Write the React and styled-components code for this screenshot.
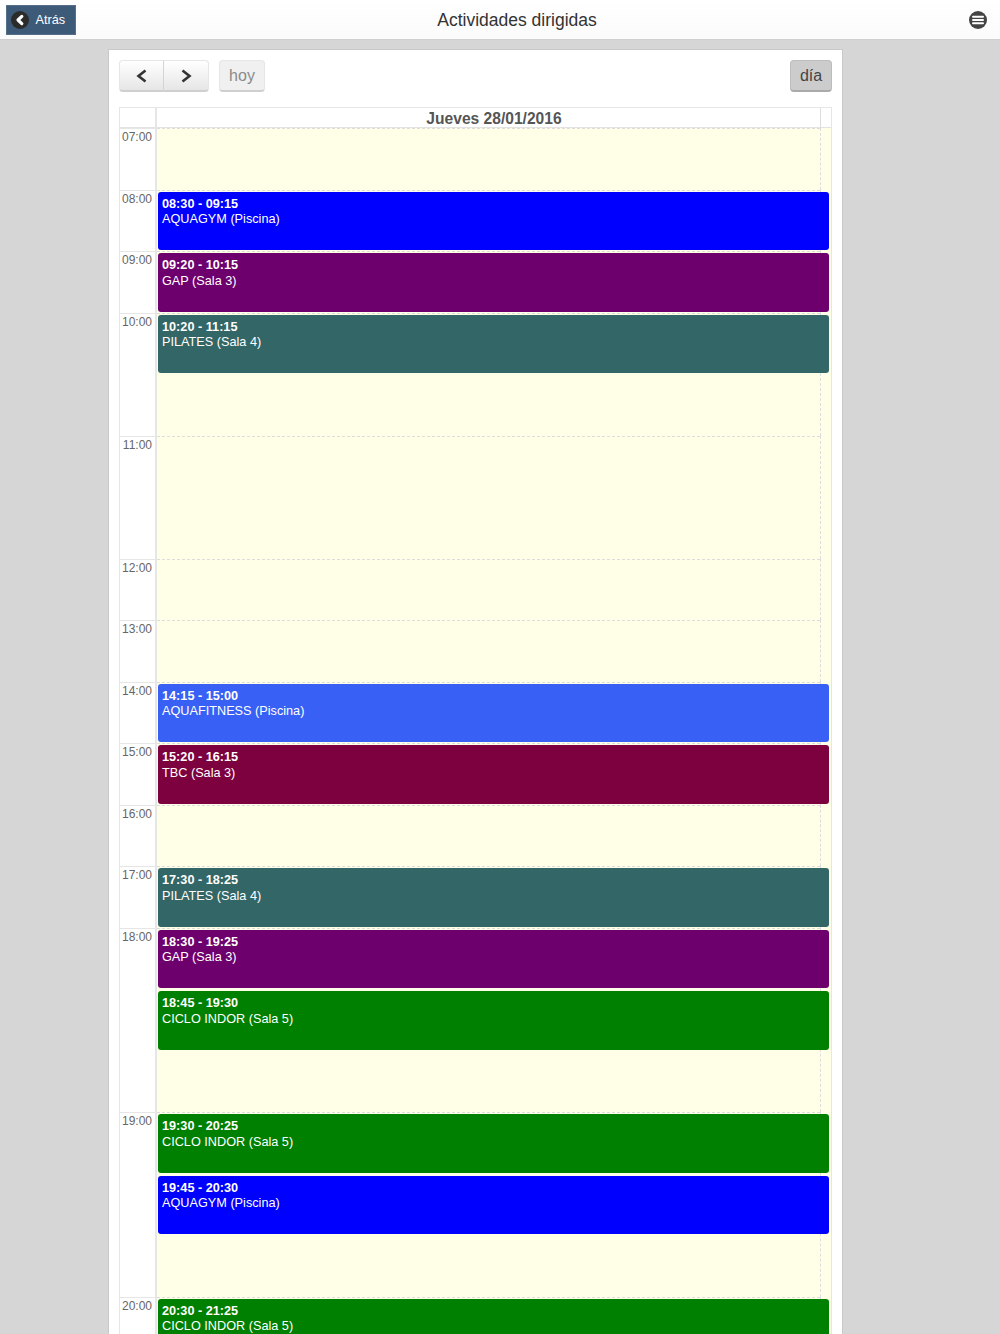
import React from "react";
import styled, { createGlobalStyle } from "styled-components";

const Global = createGlobalStyle`
  html, body { margin: 0; height: 100%; overflow: hidden; background: #d6d6d6; }
  body { font-family: "Liberation Sans", Arial, sans-serif; }
  * { box-sizing: border-box; }
`;
const TopBar = styled.header`
  display: flex; align-items: center; height: 40px; padding-left: 6px;
  background: linear-gradient(#ffffff, #fbfbfb); border-bottom: 1px solid #cfcfcf;
`;
const BackButton = styled.div`
  display: flex; align-items: center; gap: 7px; width: 70px; height: 30px; padding-left: 3.5px;
  background: #3d5a78; border: 1px solid #56708c; color: #fff; font-size: 12.7px;
`;
const Title = styled.h1`
  flex: 1; margin: 0; padding: 1px 0 0 3px; text-align: center; font-size: 17.5px; font-weight: 400; color: #333;
`;
const MenuBox = styled.div`
  display: flex; align-items: center; justify-content: center; width: 45px; height: 39px;
`;
const Card = styled.main`
  width: 735px; height: 1400px; margin: 9px 0 0 108px; padding: 10px;
  background: #fff; border: 1px solid #c9c9c9; border-bottom: 0;
`;
const Toolbar = styled.div`
  display: flex; align-items: stretch; height: 32px; margin-bottom: 15px;
`;
const Group = styled.div`
  display: flex; margin-right: 10px;
`;
const Button = styled.div`
  display: flex; align-items: center; justify-content: center; width: ${p => p.$w}px;
  border: 1px solid #e6e6e6; border-bottom: 2px solid #cfcfcf;
  background: ${p => p.$flat ? "#f0f0f0" : "linear-gradient(#ffffff, #e6e6e6)"};
  color: #8a8a8a; font-size: 16px;
  border-radius: ${p => p.$r || "4px"};
`;
const NextButton = styled(Button)`
  margin-left: -1px; border-left-color: #d4d4d4;
`;
const ActiveButton = styled(Button)`
  margin-left: auto; padding-top: 1px; background: #cccccc; color: #444; border-color: #bdbdbd; border-bottom-color: #aaa;
`;
const Table = styled.section`
  border: 1px solid #e6e6e6; border-bottom: 0; width: 713px;
`;
const HeaderRow = styled.div`
  display: grid; grid-template-columns: 35px 1fr; height: 20px; border-bottom: 1px solid #e2e2e2;
`;
const HeaderDay = styled.div`
  position: relative; border-left: 2px solid #e6e6e6;
  text-align: center; font-size: 15.6px; font-weight: 700; color: #555; line-height: 21px;
  &::after { content: ""; position: absolute; top: 0; bottom: 0; right: 10px; border-right: 1px solid #ddd; }
`;
const Row = styled.div`
  display: grid; grid-template-columns: 35px 1fr; height: ${p => p.$units * 61.5}px;
`;
const Hour = styled.div`
  border-top: 1px solid #e6e6e6; padding: 1px 3px 0 0; text-align: right; font-size: 12px; line-height: 14px; color: #666;
`;
const Slot = styled.div`
  position: relative; background: #fffee6; border-left: 2px solid #e6e6e6; padding: 2px 2px 0 1px;
  &::before { content: ""; position: absolute; left: 0; right: 11px; top: 0; border-top: 1px dashed #ddd; }
  &::after { content: ""; position: absolute; top: 0; bottom: 0; right: 10px; border-right: 1px dashed #ddd; }
`;
const Event = styled.article`
  position: relative; z-index: 1; height: 58.5px; margin-bottom: 3px; padding: 5px 4px; border-radius: 3px;
  background: ${p => p.$color}; color: #fff; font-size: 12.7px; line-height: 15.5px;
`;
const EventTime = styled.div`
  font-weight: 700;
`;

const C = { blue: "#0000ff", purple: "#6e006e", teal: "#336666", sky: "#3860f5", wine: "#7d003f", green: "#008000" };
const rows = [
  ["07:00", 1, []],
  ["08:00", 1, [["08:30 - 09:15", "AQUAGYM (Piscina)", C.blue]]],
  ["09:00", 1, [["09:20 - 10:15", "GAP (Sala 3)", C.purple]]],
  ["10:00", 2, [["10:20 - 11:15", "PILATES (Sala 4)", C.teal]]],
  ["11:00", 2, []],
  ["12:00", 1, []],
  ["13:00", 1, []],
  ["14:00", 1, [["14:15 - 15:00", "AQUAFITNESS (Piscina)", C.sky]]],
  ["15:00", 1, [["15:20 - 16:15", "TBC (Sala 3)", C.wine]]],
  ["16:00", 1, []],
  ["17:00", 1, [["17:30 - 18:25", "PILATES (Sala 4)", C.teal]]],
  ["18:00", 3, [["18:30 - 19:25", "GAP (Sala 3)", C.purple], ["18:45 - 19:30", "CICLO INDOR (Sala 5)", C.green]]],
  ["19:00", 3, [["19:30 - 20:25", "CICLO INDOR (Sala 5)", C.green], ["19:45 - 20:30", "AQUAGYM (Piscina)", C.blue]]],
  ["20:00", 1, [["20:30 - 21:25", "CICLO INDOR (Sala 5)", C.green]]],
];

const BackIcon = () => (
  <svg width="18" height="18" viewBox="0 0 18 18">
    <circle cx="9" cy="9" r="9" fill="#2b2b2b" />
    <path d="M10.8 5.4 L7 9 L10.8 12.6" fill="none" stroke="#fff" strokeWidth="3.2" strokeLinecap="round" strokeLinejoin="round" />
  </svg>
);
const MenuIcon = () => (
  <svg width="18" height="18" viewBox="0 0 18 18">
    <circle cx="9" cy="9" r="9" fill="#444" />
    <path d="M4 5.7h10M4 9h10M4 12.3h10" stroke="#fff" strokeWidth="2" strokeLinecap="round" />
  </svg>
);
const Chevron = ({ flip }) => (
  <svg width="12" height="14" viewBox="0 0 12 14">
    <path d={flip ? "M2.5 1.5 L9.5 7 L2.5 12.5" : "M9.5 1.5 L2.5 7 L9.5 12.5"} fill="none" stroke="#333" strokeWidth="2.6" />
  </svg>
);

export default function App() {
  return (
    <>
      <Global />
      <TopBar>
        <BackButton><BackIcon />Atrás</BackButton>
        <Title>Actividades dirigidas</Title>
        <MenuBox><MenuIcon /></MenuBox>
      </TopBar>
      <Card>
        <Toolbar>
          <Group>
            <Button $w={45} $r="4px 0 0 4px"><Chevron /></Button>
            <NextButton $w={46} $r="0 4px 4px 0"><Chevron flip /></NextButton>
          </Group>
          <Button $w={46} $flat>hoy</Button>
          <ActiveButton $w={42}>día</ActiveButton>
        </Toolbar>
        <Table>
          <HeaderRow>
            <div />
            <HeaderDay>Jueves 28/01/2016</HeaderDay>
          </HeaderRow>
          {rows.map(([hour, units, events]) => (
            <Row key={hour} $units={units}>
              <Hour>{hour}</Hour>
              <Slot>
                {events.map(([time, name, color]) => (
                  <Event key={time} $color={color}>
                    <EventTime>{time}</EventTime>
                    {name}
                  </Event>
                ))}
              </Slot>
            </Row>
          ))}
        </Table>
      </Card>
    </>
  );
}
